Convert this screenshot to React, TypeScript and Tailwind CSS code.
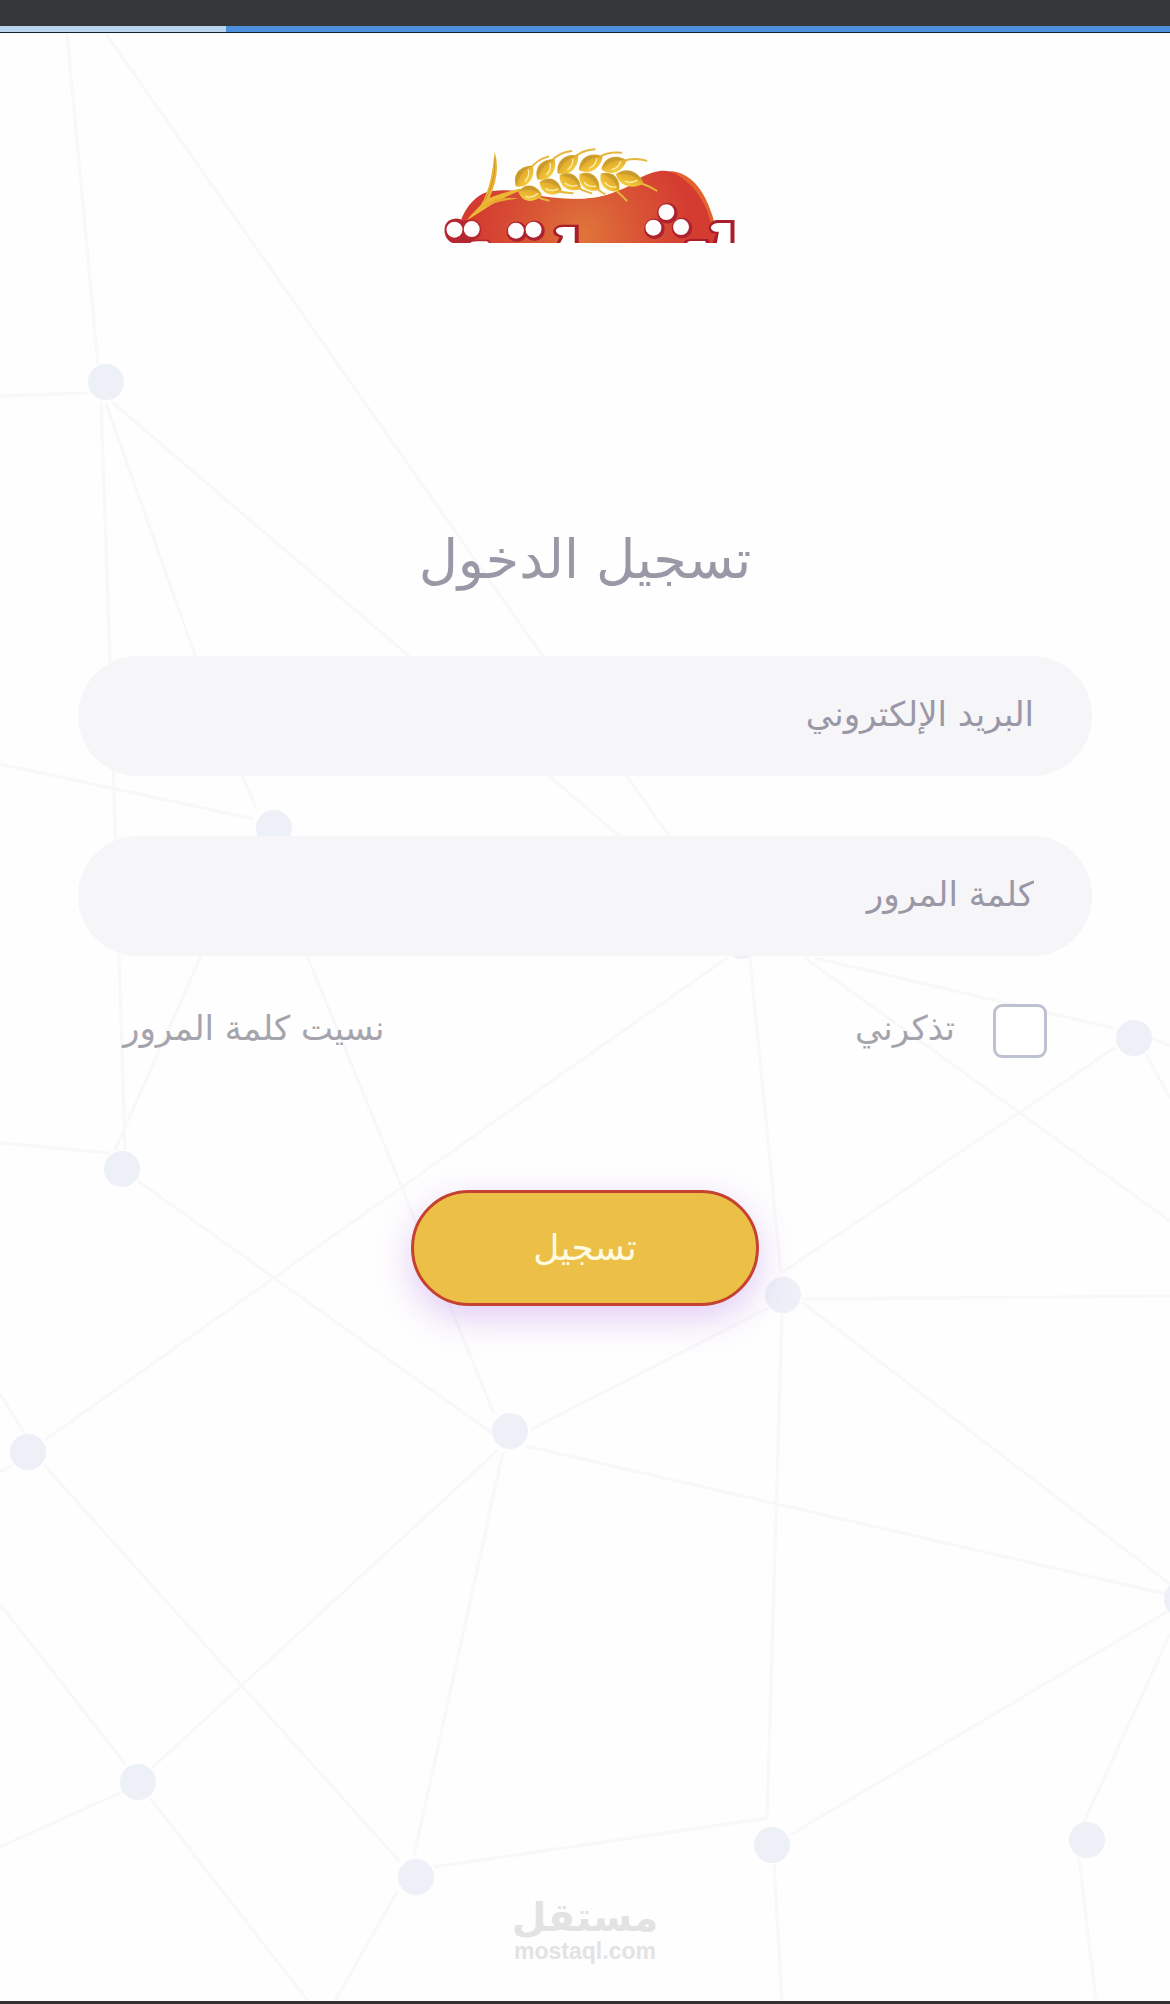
import { useState } from 'react'

const nodes = [
  [106, 382],
  [274, 828],
  [122, 1169],
  [28, 1452],
  [510, 1431],
  [783, 1295],
  [1134, 1038],
  [138, 1782],
  [416, 1877],
  [772, 1845],
  [1087, 1840],
  [1182, 1599],
  [742, 941],
]

const edges = [
  'M67 34L98 365',
  'M106 34L669 836',
  'M0 396L88 393',
  'M101 402L110 660L125 1150',
  'M106 404L195 655L238 765L256 808',
  'M112 402L742 941',
  'M0 764L254 819',
  'M264 846L200 958L115 1150',
  'M280 846L308 958L358 1080L494 1414',
  'M0 1143L110 1153',
  'M138 1181L492 1433',
  'M45 1440L553 1080L727 958',
  'M0 1394L25 1434',
  'M0 1472L12 1466',
  'M44 1465L400 1862',
  'M0 1604L126 1765',
  'M122 1792L0 1847',
  'M152 1768L498 1450',
  'M150 1798L308 2001',
  'M503 1452L414 1856',
  'M434 1867L767 1818L782 1313',
  'M398 1890L335 2001',
  'M530 1430L768 1308',
  'M526 1446L1166 1594',
  'M781 1273L750 958',
  'M783 1272L1116 1047',
  'M802 1299L1170 1296',
  'M802 1302L1170 1584',
  'M790 1835L1168 1611',
  'M1170 1634L1084 1822',
  'M774 1864L782 2001',
  'M1079 1858L1096 2001',
  'M815 958L1113 1028',
  'M805 958L1170 1221',
  'M1152 1038L1170 1046',
  'M1146 1054L1170 1098',
]

function Network() {
  return (
    <svg
      className="absolute inset-0 h-full w-full"
      viewBox="0 0 1170 2004"
      preserveAspectRatio="xMidYMin slice"
      aria-hidden="true"
    >
      <path d={edges.join('')} fill="none" stroke="#f8f8f9" strokeWidth="3" />
      {nodes.map(([x, y]) => (
        <circle key={`${x}-${y}`} cx={x} cy={y} r="18" fill="#edf0f7" />
      ))}
    </svg>
  )
}

// x, y, rotation, half length of every grain
const grains = [
  [282, 138, -50, 40],
  [347, 118, -48, 40],
  [413, 103, -40, 41],
  [482, 99, -28, 41],
  [552, 104, -18, 40],
  [300, 190, 10, 36],
  [362, 170, 24, 36],
  [421, 156, 34, 38],
  [479, 156, 40, 38],
  [541, 157, 46, 38],
  [600, 146, 20, 44],
]

const dots = [
  [72, 300],
  [124, 298],
  [257, 303],
  [310, 300],
  [710, 247],
  [671, 294],
  [754, 292],
]

function Logo() {
  return (
    <svg className="h-[95px] w-[292px]" viewBox="39 54 876 286" role="img" aria-label="الشعار">
      <defs>
        <radialGradient id="body" gradientUnits="userSpaceOnUse" cx="460" cy="310" r="330">
          <stop offset="0" stopColor="#df7539" />
          <stop offset="0.5" stopColor="#d95535" />
          <stop offset="1" stopColor="#d43b31" />
        </radialGradient>
        <linearGradient id="grain" x1="0" y1="0" x2="0" y2="1">
          <stop offset="0" stopColor="#d3a02c" />
          <stop offset="0.5" stopColor="#e8b42e" />
          <stop offset="1" stopColor="#f4cd40" />
        </linearGradient>
      </defs>
      <path
        d="M66 340L90 276C102 240 126 206 160 190C220 168 300 192 370 201C430 209 500 210 550 188C600 164 640 130 690 123C750 116 806 165 835 230C846 255 854 275 858 300V340Z"
        fill="url(#body)"
      />
      <path
        d="M722 124C780 126 822 180 842 240C852 264 856 285 858 306L848 300C836 230 800 160 722 124Z"
        fill="#e5622f"
      />
      <path d="M262 180C300 198 370 205 430 207C500 208 560 190 632 152L560 120L280 150Z" fill="#fffdf8" />

      {/* stalk */}
      <path
        d="M193 66C207 110 199 158 178 204C215 190 245 183 270 176L272 182C232 196 190 220 160 240L108 273C124 252 142 236 152 224C178 180 186 130 193 66Z"
        fill="#edb735"
      />
      <path d="M193 84C196 130 186 176 160 216" fill="none" stroke="#c9932c" strokeWidth="3" />
      <path d="M150 236C190 206 220 200 265 206C230 210 194 216 150 236Z" fill="#e9a931" />

      {/* awns */}
      <g fill="none" stroke="#e6b63f" strokeWidth="6" strokeLinecap="round">
        <path d="M300 116C314 98 330 86 354 80" />
        <path d="M364 94C378 76 398 66 424 63" />
        <path d="M432 84C448 66 470 60 494 58" />
        <path d="M508 82C524 70 548 66 574 68" />
        <path d="M578 94C604 84 630 86 650 92" />
        <path d="M324 202C334 208 344 211 356 212" />
        <path d="M384 184C398 188 414 189 428 190" />
        <path d="M442 172C458 184 472 186 484 190" />
        <path d="M500 174C508 182 514 188 524 192" />
        <path d="M556 180C568 190 580 202 590 212" />
        <path d="M626 158C646 164 664 172 680 182" />
      </g>
      {grains.map(([x, y, angle, r]) => (
        <g key={x} transform={`translate(${x} ${y}) rotate(${angle})`}>
          <path
            d={`M${-r} 2C${-r / 2} -34 ${r / 2} -28 ${r} 0C${r / 2} 28 ${-r / 2} 34 ${-r} 2Z`}
            fill="url(#grain)"
          />
          <path
            d={`M${-r} 2C-16 -30 12 -26 ${r} 0C12 -14 -10 -12 ${-r} 2Z`}
            fill="#b08a30"
            opacity="0.4"
          />
          <path d="M-10 12C4 14 14 8 22 -2" fill="none" stroke="#fbeeb0" strokeWidth="4" strokeLinecap="round" />
        </g>
      ))}

      {/* lettering cut by the lower edge */}
      <path
        d="M42 300C42 262 90 260 98 276C124 260 154 274 152 300C152 320 142 328 128 330H176L182 340H66C50 332 42 318 42 300Z"
        fill="#b52730"
      />
      <path d="M120 340C124 334 140 335 170 335L176 340Z" fill="#fff" />
      {dots.slice(2).map(([x, y]) => (
        <circle key={x} cx={x + 3} cy={y + 3} r="31" fill="#ad222e" />
      ))}
      {dots.map(([x, y]) => (
        <circle key={x} cx={x} cy={y} r="24" fill="#fdfbfb" />
      ))}
      <path d="M370 300C376 290 384 285 396 285H446V340H380L388 322C374 320 366 310 370 300Z" fill="#a81f2b" />
      <path d="M377 301C382 294 390 292 400 292H434V340H390C396 330 400 324 398 318C386 316 378 310 377 301Z" fill="#fff" />
      <path d="M838 292C842 278 850 271 866 271H915V340H850L858 312C844 312 836 304 838 292Z" fill="#a81f2b" />
      <path d="M844 292C848 284 856 280 868 280H903V340H862L868 306C854 308 844 302 844 292Z" fill="#fff" />
      <path d="M762 340C764 330 774 328 790 328H836L842 340Z" fill="#a81f2b" />
      <path d="M772 340C774 335 780 334 790 334H826L830 340Z" fill="#fff" />
    </svg>
  )
}

function Field({ type, label }: { type: string; label: string }) {
  return (
    <input
      type={type}
      aria-label={label}
      placeholder={label}
      className="block h-[120px] w-full rounded-full bg-[#f6f6f9] px-[58px] pb-1 text-[34px] leading-[72px] text-[#6c6a7a] outline-none placeholder:text-[#9a98a6] placeholder:opacity-100"
    />
  )
}

export default function App() {
  const [remember, setRemember] = useState(false)

  return (
    <div
      dir="rtl"
      className="flex min-h-screen flex-col bg-[#fefefe] font-['DejaVu_Sans',sans-serif] text-[#9a98a6]"
    >
      <div className="relative z-10 h-[26px] bg-[#353638]" />
      <div className="relative z-10 flex h-[7px] justify-end border-b border-[#14202e] bg-[#4b8fdd]">
        <div className="w-[19.3%] bg-[#b9d4ec]" />
      </div>

      <main className="flex flex-1 flex-col px-[78px]">
        <div className="absolute inset-x-0 top-0 h-full overflow-hidden">
          <Network />
        </div>

        <div className="relative flex flex-1 flex-col">
          <div className="flex justify-center pt-[115px] pl-2">
            <Logo />
          </div>

          <form className="mt-[281px] flex flex-col" onSubmit={(e) => e.preventDefault()}>
            <h1 className="text-center text-[54px] leading-[72px]">تسجيل الدخول</h1>

            <div className="mt-[60px] flex flex-col gap-[60px]">
              <Field type="email" label="البريد الإلكتروني" />
              <Field type="password" label="كلمة المرور" />
            </div>

            <div className="mt-12 flex items-start justify-between px-[45px] text-[34px] leading-[48px] text-[#a5a4ad]">
              <label className="flex gap-[38px]">
                <input
                  type="checkbox"
                  checked={remember}
                  onChange={() => setRemember(!remember)}
                  className="h-[54px] w-[54px] appearance-none rounded-[9px] border-3 border-[#bec2d0] bg-white checked:bg-[#ecbf46]"
                />
                <span>تذكرني</span>
              </label>
              <a href="#">نسيت كلمة المرور</a>
            </div>

            <button
              type="submit"
              className="mt-[132px] h-[116px] w-[348px] self-center rounded-full border-3 border-[#c4422f] bg-[#ecbf46] text-[36px] text-[#fffbe0] shadow-[0_12px_36px_rgba(140,50,220,0.25)]"
            >
              تسجيل
            </button>
          </form>

          <footer className="mt-auto flex flex-col items-center pb-[36px] font-bold text-[#e3e3e3]">
            <span className="text-[40px] leading-[40px]">مستقل</span>
            <span dir="ltr" className="font-['Liberation_Sans',sans-serif] text-[23px] leading-[28px]">
              mostaql.com
            </span>
          </footer>
        </div>
      </main>
      <div className="relative h-[3px] bg-[#343132]" />
    </div>
  )
}
